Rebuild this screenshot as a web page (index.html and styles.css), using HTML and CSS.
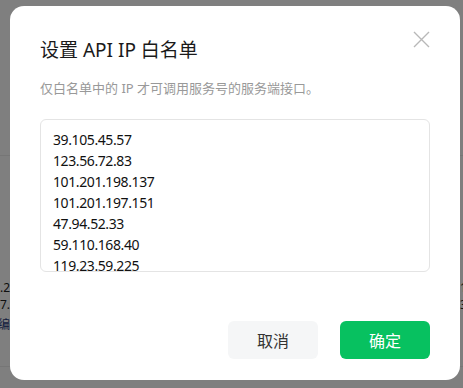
FILE: index.html
```html
<!DOCTYPE html>
<html lang="zh-CN">
<head>
    <meta charset="UTF-8">
    <meta name="viewport" content="width=device-width, initial-scale=1.0">
    <title>设置 API IP 白名单</title>
    <link rel="stylesheet" href="styles.css">
</head>
<body>
    <div class="page">
        <div class="page-head"></div>
        <div class="page-body">
            <div class="peek peek-left">
                <div class="peek-line">101.201.198.2</div>
                <div class="peek-line">101.201.197.</div>
                <div class="peek-line link">编</div>
            </div>
            <div class="peek peek-right">
                <div class="peek-line">1</div>
                <div class="peek-line">3</div>
            </div>
        </div>
        <div class="page-foot"></div>
    </div>

    <div class="mask"></div>

    <div class="dialog">
        <button class="dialog-close" aria-label="关闭">
            <svg width="17" height="17" viewBox="0 0 17 17">
                <path d="M1 1 L16 16 M16 1 L1 16" stroke="#b8b8b8" stroke-width="1.4" fill="none"/>
            </svg>
        </button>
        <h2 class="dialog-title">设置 API IP 白名单</h2>
        <p class="dialog-desc">仅白名单中的 IP 才可调用服务号的服务端接口。</p>
        <div class="ip-box">
            <div>39.105.45.57</div>
            <div>123.56.72.83</div>
            <div>101.201.198.137</div>
            <div>101.201.197.151</div>
            <div>47.94.52.33</div>
            <div>59.110.168.40</div>
            <div>119.23.59.225</div>
            <div>121.196.33.12</div>
        </div>
        <div class="dialog-footer">
            <button class="btn btn-cancel">取消</button>
            <button class="btn btn-ok">确定</button>
        </div>
    </div>
</body>
</html>
```

FILE: styles.css
```css
body {
    margin: 0;
    background-color: #fff;
    font-family: "Noto Sans", "Noto Sans CJK SC", sans-serif;
    color: #333;
}
.page {
    height: 388px;
    overflow: hidden;
}
.page-head {
    height: 155px;
    border-bottom: 1px solid #ececec;
}
.page-body {
    height: 210px;
    padding-top: 123px;
    box-sizing: border-box;
    display: flex;
    justify-content: space-between;
}
.page-foot {
    border-top: 1px solid #ececec;
}
.peek {
    font-size: 12px;
    line-height: 17px;
    color: #222;
}
.peek-left {
    width: 10px;
}
.peek-right {
    width: 3px;
}
.peek-line {
    display: flex;
    justify-content: flex-end;
    overflow: hidden;
    white-space: nowrap;
}
.peek-right .peek-line {
    justify-content: flex-start;
}
.peek-line.link {
    color: #2a3a7a;
    margin-top: 3px;
}
.mask {
    position: fixed;
    inset: 0;
    background-color: rgba(0, 0, 0, 0.5);
}
.dialog {
    position: fixed;
    left: 10px;
    top: 6px;
    width: 450px;
    box-sizing: border-box;
    padding: 30px 30px 21px;
    background-color: #fff;
    border-radius: 14px;
}
.dialog-close {
    position: absolute;
    top: 25px;
    right: 30px;
    width: 17px;
    height: 17px;
    padding: 0;
    border: none;
    background: none;
    display: flex;
}
.dialog-title {
    margin: 0;
    font-size: 19px;
    line-height: 28px;
    font-weight: normal;
    color: #1a1a1a;
}
.dialog-desc {
    margin: 14px 0 0;
    font-size: 13px;
    line-height: 20px;
    color: #999;
}
.ip-box {
    margin-top: 21px;
    height: 153px;
    box-sizing: border-box;
    padding: 9px 12px;
    border: 1px solid #e4e4e4;
    border-radius: 6px;
    overflow: hidden;
    font-size: 14px;
    line-height: 21px;
    letter-spacing: -0.4px;
    color: #111;
}
.dialog-footer {
    margin-top: 49px;
    display: flex;
    justify-content: flex-end;
    gap: 22px;
}
.btn {
    width: 90px;
    height: 38px;
    border: none;
    border-radius: 6px;
    font-family: inherit;
    font-size: 16px;
    cursor: pointer;
}
.btn-cancel {
    background-color: #f5f6f7;
    color: #333;
}
.btn-ok {
    background-color: #07c160;
    color: #fff;
}
```
